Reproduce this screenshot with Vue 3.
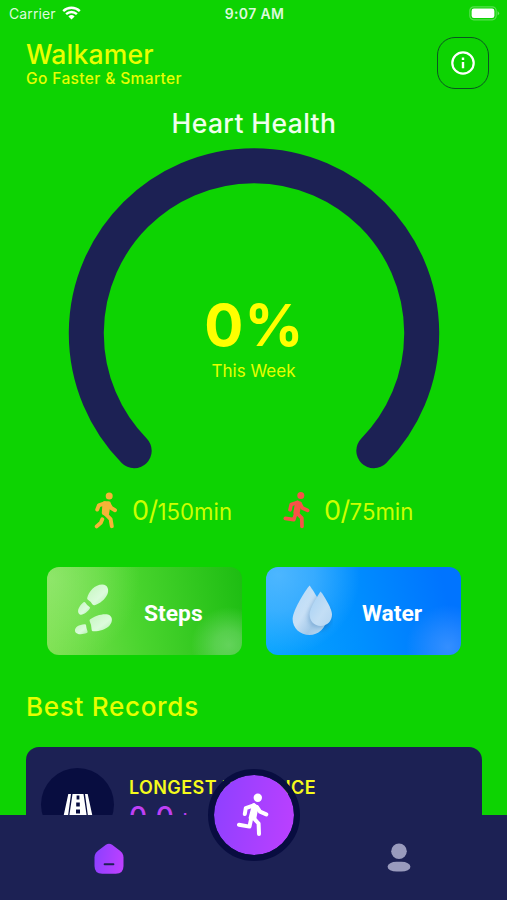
<script setup>
const goals = [
  { kind: 'walk', value: '0', limit: '150min' },
  { kind: 'run', value: '0', limit: '75min' },
]
</script>

<template>
  <div class="screen">
    <header class="status">
      <div class="carrier">
        <span>Carrier</span>
        <svg class="wifi" viewBox="0 0 19 14" width="19" height="14">
          <path d="M1.2 5.1a12 12 0 0 1 16.6 0" />
          <path d="M4.1 8.1a7.8 7.8 0 0 1 10.8 0" />
          <path class="dot" d="M6.4 10.5a4.5 4.5 0 0 1 6.2 0L9.5 13.6z" />
        </svg>
      </div>
      <span class="time">9:07 AM</span>
      <svg class="battery" viewBox="0 0 31 15" width="31" height="15">
        <rect x=".8" y=".8" width="26.4" height="13" rx="4" fill="none" stroke="#fff" stroke-opacity=".3" stroke-width="1.2" />
        <rect x="2.6" y="2.6" width="22.8" height="9.4" rx="2.3" fill="#fff" />
        <path d="M28.6 5q3 2.3 0 4.6z" fill="#fff" fill-opacity=".4" />
      </svg>
    </header>

    <section class="heading">
      <div>
        <h1>Walkamer</h1>
        <p>Go Faster &amp; Smarter</p>
      </div>
      <button class="info" aria-label="Info">
        <svg viewBox="0 0 26 26" width="26" height="26">
          <circle cx="13" cy="13" r="10.7" fill="none" stroke="#fff" stroke-width="2.2" />
          <path d="M13 12v6.2M13 7.6v2.3" stroke="#fff" stroke-width="2.4" />
        </svg>
      </button>
    </section>

    <h2 class="title">Heart Health</h2>

    <section class="gauge">
      <svg viewBox="0 0 372 322" width="372" height="322">
        <path d="M66.2 302.7A167.7 167.7 0 1 1 305.8 302.7" fill="none" stroke="#1c2154" stroke-width="35" stroke-linecap="round" />
      </svg>
      <div class="reading">
        <strong>0%</strong>
        <span>This Week</span>
      </div>
    </section>

    <section class="goals">
      <div v-for="g in goals" :key="g.kind" class="goal" :class="g.kind">
        <svg v-if="g.kind === 'walk'" class="figure" viewBox="0 0 24 38" width="24" height="38">
          <circle cx="15.2" cy="4.9" r="3.5" fill="currentColor" />
          <path d="M10.6 12.4L14.6 12.4L12.8 23L10 22Z" fill="currentColor" stroke="currentColor" stroke-width="4.4" stroke-linejoin="round" />
          <path d="M10.5 12.3L4.8 14.4L3.2 18.6M15 13.2L17.3 17L21 19.2M11.5 23L16.6 28.2L17.8 35.2M8.3 28.3L6.8 31.8L2.7 35.4" fill="none" stroke="currentColor" stroke-width="3.9" stroke-linecap="round" stroke-linejoin="round" />
        </svg>
        <svg v-else class="figure" viewBox="0 0 27 38" width="27" height="38">
          <circle cx="17.8" cy="4.6" r="3.5" fill="currentColor" />
          <path d="M14 11.6L16.6 12.4L14.8 21.8L12.2 21.8Z" fill="currentColor" stroke="currentColor" stroke-width="3.8" stroke-linejoin="round" />
          <path d="M14.4 11.4L8.2 13.4L7 18.8M17.2 12.8L19.4 17L24.6 19.4M13 22L10.8 28.6L2.3 27.4M14.8 23L18.8 27L19 35.4" fill="none" stroke="currentColor" stroke-width="3.7" stroke-linecap="round" stroke-linejoin="round" />
        </svg>
        <div class="amount"><b>{{ g.value }}/</b><span>{{ g.limit }}</span></div>
      </div>
    </section>

    <section class="tiles">
      <div class="tile steps">
        <svg viewBox="0 0 42 56" width="42" height="56">
          <defs>
            <linearGradient id="sole" x1="0" y1="0" x2="1" y2="1">
              <stop offset="0" stop-color="#c4f6bd" />
              <stop offset=".6" stop-color="#dcfbdc" />
              <stop offset="1" stop-color="#b2efae" />
            </linearGradient>
          </defs>
          <path d="M15.2 17C16.5 10.5 23 3.4 30.3 3.4C36 3.6 37.3 9 35.3 13.5C33 18.5 28 22.5 22.6 24.2Q21.4 24.6 20.3 23.2Q18.6 20.2 15.6 18.4Q15 17.8 15.2 17Z" fill="url(#sole)" />
          <path d="M11.5 21.3Q12.3 20.6 13 21.2Q15 24.3 17.6 26Q18.4 26.6 17.8 27.5C15.5 31 11 34.6 7.8 33.4C4.5 31.5 6 26 11.5 21.3Z" fill="url(#sole)" />
          <path d="M17.9 38.6C22.5 35 30.5 32.5 36 33.6C41 35.2 41 41 37.2 45C33 49 26.5 50.5 20.8 50.2Q19.6 50 19.6 48.5Q19.6 44 17.7 40.2Q17.3 39.2 17.9 38.6Z" fill="url(#sole)" />
          <path d="M12.6 43.2Q13.8 43 14 44Q14.3 47.6 15.6 50.6Q15.9 51.7 14.7 52.1C10.5 53.8 4.2 54 3 50.2C2.4 46 7 43.5 12.6 43.2Z" fill="url(#sole)" />
        </svg>
        <span>Steps</span>
      </div>
      <div class="tile water">
        <svg viewBox="0 0 42 56" width="42" height="56">
          <defs>
            <linearGradient id="drop" x1="0" y1="0" x2="1" y2="1">
              <stop offset="0" stop-color="#b4daf8" />
              <stop offset=".45" stop-color="#c8e0f6" />
              <stop offset=".7" stop-color="#a4c9e9" />
              <stop offset="1" stop-color="#bddbf3" />
            </linearGradient>
            <linearGradient id="droplet" x1="0" y1="0" x2="1" y2="1">
              <stop offset="0" stop-color="#a4d0f5" />
              <stop offset=".6" stop-color="#c3def5" />
              <stop offset="1" stop-color="#b4d5f1" />
            </linearGradient>
            <clipPath id="dropclip"><path d="M18.6 4.5C20 6 35 29 35 38C35 47.5 27 54 18.6 54C9 54 1.6 47 1.6 38C1.6 29 16 7 18.6 4.5Z" /></clipPath>
            <filter id="soft" x="-40%" y="-40%" width="180%" height="180%"><feGaussianBlur stdDeviation="2" /></filter>
          </defs>
          <path d="M30 15C33 20 41 30 40 39C37 52 21 53 19 42Z" fill="#1669b5" opacity=".55" filter="url(#soft)" />
          <path d="M18.6 4.5C20 6 35 29 35 38C35 47.5 27 54 18.6 54C9 54 1.6 47 1.6 38C1.6 29 16 7 18.6 4.5Z" fill="url(#drop)" />
          <g clip-path="url(#dropclip)">
            <path d="M28 12C30 14 39 28 39 34.5C39 42 35 47 28 47C21 47 17 41 17 35.5C17 29 26 15 28 12Z" fill="#5f97c9" opacity=".5" filter="url(#soft)" />
          </g>
          <path d="M29.6 10.5C31.2 12 41 27 41 33.5C41 40 36.2 45 29.6 45C23.2 45 18.6 40 18.6 33.5C18.6 27 27.7 13 29.6 10.5Z" fill="url(#droplet)" />
        </svg>
        <span>Water</span>
      </div>
    </section>

    <h2 class="records-title">Best Records</h2>
    <section class="record">
      <div class="badge">
        <svg viewBox="0 0 32 34" width="32" height="34">
          <path d="M6.3 0H9L4.4 34H-1zM23 0h2.7L33 34h-5.4zM10.5 0h11l5 34h-21z" fill="#fff" />
          <path d="M14.6 1.5h2.8v4h-2.8zM14.2 8.5h3.6v4h-3.6zM14 15.5h4v4h-4zM13.6 23h4.8v5h-4.8z" fill="#080d40" />
        </svg>
      </div>
      <div class="record-text">
        <h3>LONGEST DISTANCE</h3>
        <div class="distance">0.0 <small>km</small></div>
      </div>
    </section>

    <nav class="tabs">
      <svg class="home" viewBox="0 0 30 32" width="30" height="32">
        <defs>
          <linearGradient id="violet" x1="0" y1=".4" x2="1" y2=".6">
            <stop offset="0" stop-color="#8d40ff" />
            <stop offset="1" stop-color="#bd40ff" />
          </linearGradient>
        </defs>
        <path d="M11.9 1.8Q15 -.4 18.1 1.8L26 7.7Q29.5 10.4 29.5 14.5V23Q29.5 30.8 21.7 30.8H8.3Q.5 30.8 .5 23V14.5Q.5 10.4 4 7.7Z" fill="url(#violet)" />
        <path d="M10.6 21.3h8.8" stroke="#1c2154" stroke-width="2" stroke-linecap="round" />
      </svg>
      <button class="start" aria-label="Start">
        <svg viewBox="0 0 34 46" width="34" height="46">
          <circle cx="20.8" cy="5.7" r="4.2" fill="#fff" />
          <path d="M16.8 13L19.7 15L17.6 26L13.4 26Z" fill="#fff" stroke="#fff" stroke-width="3.6" stroke-linejoin="round" />
          <path d="M16.7 13.4L8.8 16.2L7.8 22M20 15L23 19.7L29.3 22.4M14.3 26L12.5 34.6L2 32.7M17 26.5L21.6 31.5L22 42" fill="none" stroke="#fff" stroke-width="4" stroke-linecap="round" stroke-linejoin="round" />
        </svg>
      </button>
      <svg class="profile" viewBox="0 0 24 30" width="24" height="30">
        <circle cx="12" cy="8.3" r="7.8" fill="#999bbd" />
        <rect x=".6" y="18.8" width="22.8" height="9.8" rx="9" ry="4.9" fill="#999bbd" />
      </svg>
    </nav>
  </div>
</template>

<style>
body { margin: 0; overflow: hidden; }
</style>

<style scoped>
* { box-sizing: border-box; }
.screen {
  position: relative;
  display: flex;
  flex-direction: column;
  width: 507px;
  height: 900px;
  overflow: hidden;
  background: #0dd302;
  color: #e6ff00;
  font-family: Inter, "Liberation Sans", sans-serif;
}
h1, h2, h3, p { margin: 0; font-weight: 500; white-space: nowrap; }
button { padding: 0; background: none; }
svg { display: block; flex: none; }

.status {
  display: grid;
  grid-template-columns: 1fr auto 1fr;
  align-items: center;
  flex: none;
  height: 27px;
  padding: 0 7px 0 9px;
  color: #dcfadc;
  font-size: 14px;
  line-height: 27px;
}
.carrier { display: flex; align-items: center; gap: 6px; letter-spacing: 0.1px; }
.wifi { margin-top: -2px; }
.wifi path { fill: none; stroke: #fff; stroke-width: 2.4; }
.wifi .dot { fill: #fff; stroke: none; }
.time { font-weight: 600; letter-spacing: 0.35px; }
.battery { justify-self: end; }

.heading {
  display: flex;
  justify-content: space-between;
  flex: none;
  height: 77px;
  padding: 10px 18px 0 26px;
}
h1 { height: 33px; font-size: 26.5px; line-height: 34px; letter-spacing: 0.2px; color: #eaff00; }
.heading p { font-size: 15.5px; line-height: 18px; letter-spacing: 0.38px; }
.info {
  display: grid;
  place-items: center;
  width: 52px;
  height: 52px;
  border: 1.5px solid #0b5523;
  border-radius: 18px;
}
.title {
  flex: none;
  height: 38px;
  padding-left: 1px;
  color: #efffec;
  font-size: 26.5px;
  line-height: 38px;
  letter-spacing: 0.4px;
  text-align: center;
}

.gauge { display: grid; justify-content: center; flex: none; height: 347px; padding-top: 6px; }
.gauge > * { grid-area: 1 / 1; }
.reading { display: flex; flex-direction: column; align-items: center; padding-top: 142px; }
.reading strong {
  height: 71px;
  padding-left: 2px;
  color: #ff0;
  font-size: 58px;
  font-weight: 700;
  line-height: 71px;
  letter-spacing: 1.2px;
}
.reading span { font-size: 17px; line-height: 20px; }

.goals {
  display: grid;
  grid-template-columns: 189px auto;
  justify-content: start;
  flex: none;
  height: 52px;
  padding: 2px 0 0 94px;
}
.goal { display: flex; height: 38px; gap: 14px; }
.walk { color: #f6b338; }
.run { color: #f75248; }
.amount { display: flex; align-items: baseline; color: #ccff00; line-height: 40px; }
.amount b { font-size: 27px; font-weight: 400; letter-spacing: -0.6px; }
.amount span { font-size: 22.2px; }

.tiles { display: flex; flex: none; gap: 24px; padding: 26px 46px 0 47px; }
.tile {
  display: flex;
  align-items: center;
  width: 195px;
  height: 88px;
  padding-left: 25px;
  border-radius: 12px;
  color: #fff;
  font: 700 22.8px/30px Roboto, sans-serif;
}
.tile svg { margin-top: -4px; }
.tile span { margin: 5px 0 0 30px; }
.tile.water span { margin-left: 29px; }
.steps {
  background:
    radial-gradient(circle at 182px 78px, rgba(130, 220, 125, 0.65), rgba(130, 220, 125, 0.5) 14px, transparent 38px),
    radial-gradient(circle at 5px 12px, rgba(180, 240, 150, 0.4), rgba(165, 238, 130, 0.28) 45px, transparent 88px),
    linear-gradient(80deg, #7ee152, #4bd52f 45%, #1dbd12);
}
.water {
  background:
    radial-gradient(circle at 182px 80px, rgba(80, 155, 255, 0.65), rgba(70, 150, 255, 0.45) 18px, transparent 42px),
    radial-gradient(circle at 12px 8px, rgba(100, 190, 255, 0.75), rgba(90, 185, 255, 0.6) 36px, transparent 82px),
    linear-gradient(75deg, #08a5ff, #0090ff 45%, #0074ff 90%);
}
.records-title { flex: none; margin: 32px 0 0 26px; height: 40px; font-size: 26px; line-height: 40px; letter-spacing: 0.72px; }
.record {
  display: flex;
  flex: none;
  height: 110px;
  margin: 20px 25px 0 26px;
  padding: 21px 15px;
  gap: 15px;
  border-radius: 13px;
  background: #1c2154;
}
.badge {
  display: flex;
  justify-content: center;
  flex: none;
  width: 73px;
  height: 73px;
  padding-top: 26px;
  border-radius: 50%;
  background: #080d40;
}
.record-text { padding-top: 10px; }
h3 { color: #f5fb1c; font-size: 18px; font-weight: 600; line-height: 20px; letter-spacing: 0.4px; }
.distance { margin-top: -1px; color: #bf40f5; font-size: 28px; font-weight: 500; line-height: 40px; letter-spacing: 0.8px; }
.distance small { font-size: 19px; }

.tabs {
  position: absolute;
  right: 0;
  bottom: 0;
  left: 0;
  display: flex;
  align-items: flex-start;
  height: 85.5px;
  padding: 28px 96px 0 94px;
  background: #1c2154;
}
.start {
  display: grid;
  place-items: center;
  flex: none;
  width: 92px;
  height: 92px;
  margin: -74px auto 0 84px;
  border: 6px solid #080d40;
  border-radius: 50%;
  background: linear-gradient(100deg, #8d40ff, #bd40ff) padding-box;
}
</style>
